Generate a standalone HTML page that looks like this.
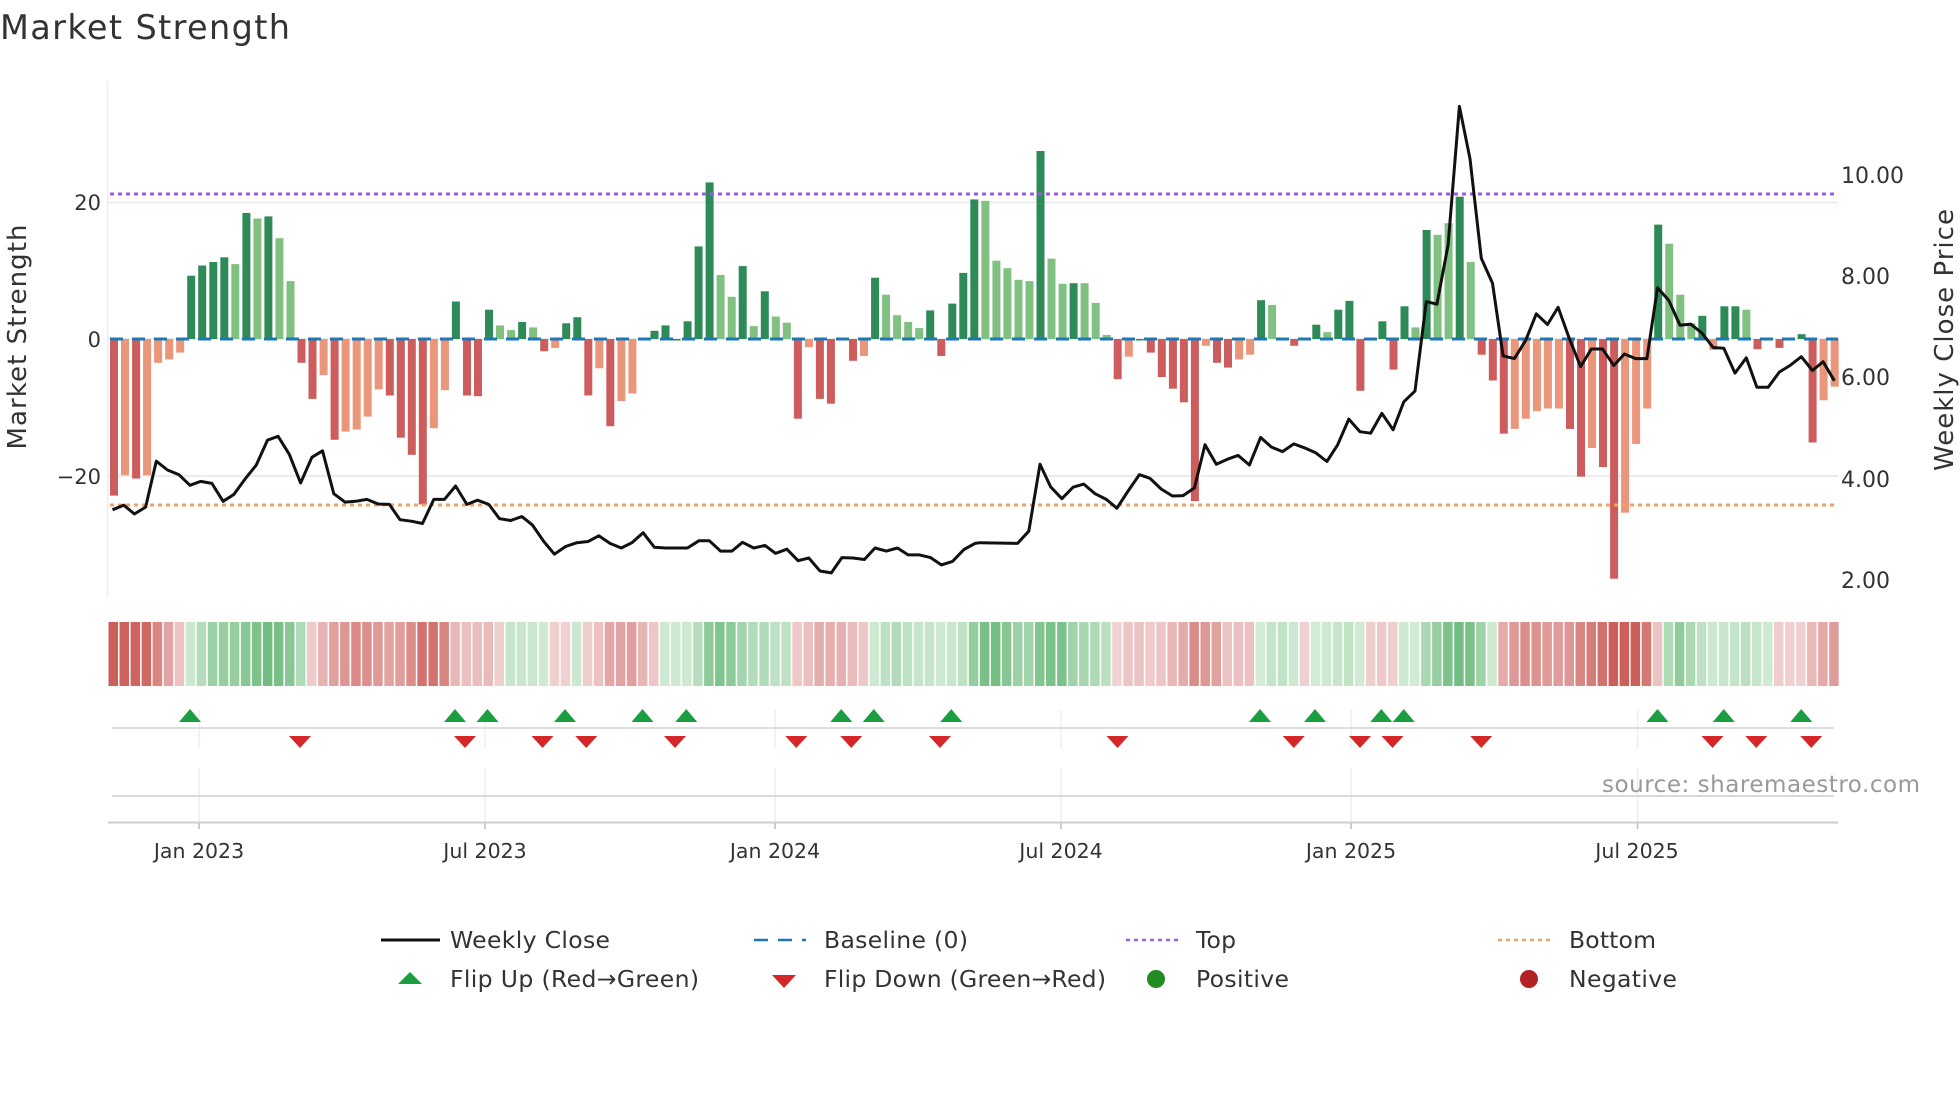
<!DOCTYPE html>
<html><head><meta charset="utf-8"><style>
html,body{margin:0;padding:0;background:#fff;width:1960px;height:1102px;overflow:hidden}
svg{display:block}
text{font-family:"DejaVu Sans","Liberation Sans",sans-serif;fill:#333}
</style></head><body>
<svg id="s" width="1960" height="1102" viewBox="0 0 1960 1102" xmlns="http://www.w3.org/2000/svg">
<text x="0" y="39" font-size="33.5" textLength="290" fill="#333">Market Strength</text>
<g id="g"></g>
<text x="101" y="210" font-size="21" text-anchor="end">20</text>
<text x="101" y="347" font-size="21" text-anchor="end">0</text>
<text x="101" y="484" font-size="21" text-anchor="end">−20</text>
<text x="1841" y="183" font-size="22">10.00</text>
<text x="1841" y="284" font-size="22">8.00</text>
<text x="1841" y="385" font-size="22">6.00</text>
<text x="1841" y="487" font-size="22">4.00</text>
<text x="1841" y="588" font-size="22">2.00</text>
<text transform="translate(26,337) rotate(-90)" font-size="26" text-anchor="middle" textLength="225">Market Strength</text>
<text transform="translate(1953,340) rotate(-90)" font-size="26" text-anchor="middle" textLength="262">Weekly Close Price</text>
<text x="199" y="858" font-size="20.5" text-anchor="middle">Jan 2023</text>
<text x="485" y="858" font-size="20.5" text-anchor="middle">Jul 2023</text>
<text x="775" y="858" font-size="20.5" text-anchor="middle">Jan 2024</text>
<text x="1061" y="858" font-size="20.5" text-anchor="middle">Jul 2024</text>
<text x="1351" y="858" font-size="20.5" text-anchor="middle">Jan 2025</text>
<text x="1637" y="858" font-size="20.5" text-anchor="middle">Jul 2025</text>
<text x="1920" y="792" font-size="23" text-anchor="end" style="fill:#999" textLength="318">source: sharemaestro.com</text>
<line x1="381" y1="940" x2="440" y2="940" stroke="#111" stroke-width="3"/>
<text x="450" y="948" font-size="23.5" textLength="160">Weekly Close</text>
<line x1="754" y1="940" x2="806" y2="940" stroke="#1f77b4" stroke-width="2.5" stroke-dasharray="14,10"/>
<text x="824" y="948" font-size="23.5" textLength="144">Baseline (0)</text>
<line x1="1126" y1="940" x2="1181" y2="940" stroke="#9b5de5" stroke-width="2.5" stroke-dasharray="4,4"/>
<text x="1196" y="948" font-size="23.5" textLength="40">Top</text>
<line x1="1498" y1="940" x2="1554" y2="940" stroke="#f4a261" stroke-width="2.5" stroke-dasharray="4,4"/>
<text x="1569" y="948" font-size="23.5" textLength="87">Bottom</text>
<polygon points="410,972 422,984 398,984" fill="#1a9e3f"/>
<text x="450" y="987" font-size="23.5" textLength="249">Flip Up (Red→Green)</text>
<polygon points="772,975 796,975 784,988" fill="#d62728"/>
<text x="824" y="987" font-size="23.5" textLength="282">Flip Down (Green→Red)</text>
<circle cx="1156" cy="979" r="9" fill="#228b22"/>
<text x="1196" y="987" font-size="23.5" textLength="93">Positive</text>
<circle cx="1529" cy="979" r="9" fill="#b22222"/>
<text x="1569" y="987" font-size="23.5" textLength="108">Negative</text>
</svg>
<script>
var D='#2e8b57',L='#80c080',R='#cd5c5c',O='#e9967a';
var bars=[['R',-23],['O',-20],['R',-20.5],['O',-20],['O',-3.5],['O',-3],['O',-2],['D',9.3],['D',10.8],['D',11.3],['D',12],['L',11],['D',18.5],['L',17.7],['D',18],['L',14.8],['L',8.5],['R',-3.5],['R',-8.8],['O',-5.3],['R',-14.8],['O',-13.6],['O',-13.3],['O',-11.4],['O',-7.4],['R',-8.3],['R',-14.5],['R',-17],['R',-24.3],['O',-13.1],['O',-7.5],['D',5.5],['R',-8.3],['R',-8.4],['D',4.3],['L',2],['L',1.3],['D',2.5],['L',1.7],['R',-1.8],['O',-1.3],['D',2.3],['D',3.2],['R',-8.3],['O',-4.3],['R',-12.8],['O',-9.1],['O',-8],['D',0.2],['D',1.2],['D',2],['D',0],['D',2.6],['D',13.6],['D',23],['L',9.4],['L',6.2],['D',10.7],['L',1.9],['D',7],['L',3.3],['L',2.4],['R',-11.7],['O',-1.2],['R',-8.8],['R',-9.5],['D',0.2],['R',-3.2],['O',-2.5],['D',9],['L',6.5],['L',3.5],['L',2.5],['L',1.6],['D',4.2],['R',-2.5],['D',5.2],['D',9.7],['D',20.5],
['L',20.3],['L',11.5],['L',10.4],['L',8.7],['L',8.5],['D',27.6],['L',11.8],['L',8.1],['D',8.2],['L',8.2],['L',5.3],['L',0.6],['R',-5.9],['O',-2.6],['D',0],['R',-2],['R',-5.6],['R',-7.3],['R',-9.3],['R',-23.8],['O',-1],['R',-3.5],['R',-4.2],['O',-3],['O',-2.3],['D',5.7],['L',5],['D',0],['R',-1],['D',0],['D',2.1],['L',1],['D',4.3],['D',5.6],['R',-7.6],['O',-0.2],['D',2.6],['R',-4.5],['D',4.8],['L',1.7],['D',16],['L',15.3],['L',17],['D',20.9],['L',11.3],['R',-2.3],['R',-6.1],['R',-13.9],['O',-13.2],['O',-11.7],['O',-10.6],['O',-10.2],['O',-10.2],['R',-13.2],['R',-20.2],['O',-16],['R',-18.8],['R',-35.2],['O',-25.5],['O',-15.4],['O',-10.2],['D',16.8],['L',14],['L',6.5],['L',2.3],['D',3.4],['O',-1.6],['D',4.8],['D',4.8],['L',4.3],['R',-1.5],['D',0],['R',-1.3],['D',0],['D',0.7],['R',-15.2],['O',-9],['O',-7]];
var C={D:D,L:L,R:R,O:O};
var s='';
var Z=339,U=6.81,X0=114,DX=11.03;
s+='<line x1="107.5" y1="81" x2="107.5" y2="597" stroke="#eee" stroke-width="1.5"/>';
[202.5,339,476].forEach(function(y){s+='<line x1="108" y1="'+y+'" x2="1838" y2="'+y+'" stroke="#ececec" stroke-width="2"/>';});
bars.forEach(function(b,i){var x=X0+DX*i-4,v=b[1]*U;var y=v>=0?Z-v:Z;var h=Math.max(Math.abs(v),1.5);s+='<rect x="'+x.toFixed(1)+'" y="'+y.toFixed(1)+'" width="8" height="'+h.toFixed(1)+'" fill="'+C[b[0]]+'"/>';});
s+='<line x1="110" y1="339" x2="1838" y2="339" stroke="#1f77b4" stroke-width="3" stroke-dasharray="13,9"/>';
s+='<line x1="110" y1="194" x2="1838" y2="194" stroke="#9b5de5" stroke-width="3" stroke-dasharray="4,4"/>';
s+='<line x1="110" y1="505" x2="1838" y2="505" stroke="#f4a261" stroke-width="3" stroke-dasharray="4,4"/>';
var A=[[180,1332],[198,1320],[215,1343],[233,1325],[250,1205],[268,1228],[286,1240],[304,1268],[321,1258],[339,1263],[357,1310],[374,1292],[392,1252],[410,1215],[428,1150],[445,1140],[463,1188],[481,1262],[499,1195],[516,1178],[534,1290],[552,1312],[569,1310],[587,1305],[605,1317],[623,1318],[640,1358],[658,1362],[676,1368],[694,1305],[711,1305],[729,1270],[747,1318],[764,1307],[782,1318],[799,1355],[817,1360],[835,1350],[852,1372],[870,1415],[887,1448],[905,1428],[923,1418],[941,1415],[958,1400],[976,1420],[994,1432],[1011,1418],[1029,1392],[1047,1430],[1065,1432],[1082,1432],[1100,1432],[1118,1413],[1135,1413],[1153,1440],[1171,1440],[1188,1417],[1206,1432],[1224,1425],[1241,1446],[1259,1435],[1277,1465],[1294,1458],[1312,1492],[1330,1497],[1347,1457],[1365,1458],[1383,1462],[1400,1432],[1418,1440],[1436,1432],[1453,1450],[1471,1450],[1489,1457],[1506,1476],[1524,1467],[1542,1436],[1560,1420]];
var B=[[0,1418],[60,1420],[78,1388],[96,1213],[113,1272],[131,1303],[149,1273],[166,1265],[184,1290],[202,1305],[219,1328],[237,1283],[255,1240],[272,1250],[290,1278],[308,1296],[325,1295],[343,1275],[360,1162],[378,1213],[396,1200],[413,1190],[431,1215],[449,1143],[466,1168],[484,1180],[502,1160],[519,1170],[537,1183],[555,1206],[572,1163],[590,1095],[608,1128],[625,1132],[643,1080],[661,1123],[678,1050],[696,1022],[714,788],[731,795],[749,640],[767,278],[784,415],[802,675],[820,740],[837,930],[855,937],[873,890],[890,820],[908,848],[925,803],[943,885],[961,958],[978,912],[996,912],[1014,955],[1031,925],[1049,937],[1067,937],[1084,752],[1102,785],[1120,850],[1137,847],[1155,870],[1173,908],[1190,910],[1208,975],[1226,935],[1243,1012],[1261,1012],[1279,972],[1296,955],[1314,932],[1332,968],[1349,945],[1367,995]];
var pts=A.map(function(p){return (p[0]/1.6).toFixed(1)+','+(p[1]/2.613).toFixed(1);}).concat(B.map(function(p){return (980+p[0]/1.6).toFixed(1)+','+(p[1]/2.613).toFixed(1);}));
s+='<polyline points="'+pts.join(' ')+'" fill="none" stroke="#111" stroke-width="3" stroke-linejoin="round"/>';
function mix(a,b,t){return 'rgb('+[0,1,2].map(function(k){return Math.round(a[k]+(b[k]-a[k])*t);}).join(',')+')';}
var sm=bars.map(function(b,i){var t=0,n=0;for(var j=i-2;j<=i;j++){if(j>=0){t+=bars[j][1];n++;}}return t/n;});
bars.forEach(function(b,i){var v=sm[i],x=108.5+DX*i,c;var t=Math.min(1,Math.abs(v)/22);
if(v>=0)c=mix([212,236,214],[92,178,110],t);else c=mix([240,210,210],[205,95,90],t);
s+='<rect x="'+x.toFixed(1)+'" y="622" width="'+(DX-1.5).toFixed(1)+'" height="64" fill="'+c+'"/>';});
[199,485,775,1061,1351,1637.5].forEach(function(x){s+='<line x1="'+x+'" y1="710" x2="'+x+'" y2="748" stroke="#eee" stroke-width="1.5"/><line x1="'+x+'" y1="768" x2="'+x+'" y2="822" stroke="#eee" stroke-width="1.5"/><line x1="'+x+'" y1="822" x2="'+x+'" y2="829" stroke="#bbb" stroke-width="1.5"/>';});
s+='<line x1="112" y1="728" x2="1834" y2="728" stroke="#ddd" stroke-width="2"/>';
s+='<line x1="112" y1="796" x2="1834" y2="796" stroke="#d8d8d8" stroke-width="2"/>';
s+='<line x1="108" y1="822.5" x2="1838" y2="822.5" stroke="#ccc" stroke-width="2"/>';
[152,364,390,452,514,549,673,699,761,1008,1052,1105,1123,1326,1379,1441].forEach(function(d){var x=d*1.25;s+='<polygon points="'+(x-11)+',722 '+(x+11)+',722 '+x+',709" fill="#1a9e3f"/>';});
[240,372,434,469,540,637,681,752,894,1035,1088,1114,1185,1370,1405,1449].forEach(function(d){var x=d*1.25;s+='<polygon points="'+(x-11)+',736 '+(x+11)+',736 '+x+',748" fill="#d62728"/>';});
document.getElementById('g').innerHTML=s;
</script>
</body></html>
